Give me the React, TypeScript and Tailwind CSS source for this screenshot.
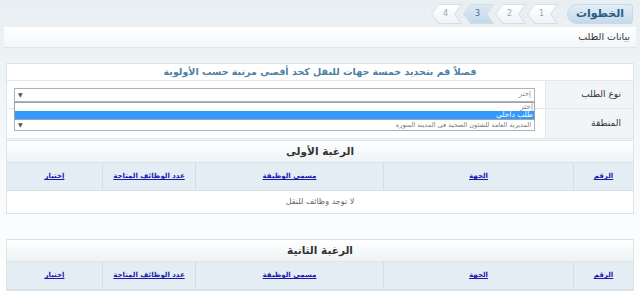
import React from 'react';

const font = { fontFamily: '"DejaVu Sans", "Liberation Sans", sans-serif' };

const Chevron = ({ n, active }: { n: number; active?: boolean }) => (
  <div className="relative w-[31px] h-[20px] flex items-center justify-center">
    <svg width="31" height="20" viewBox="0 0 31 20" className="absolute inset-0">
      <defs>
        <linearGradient id={`g${n}`} x1="0" y1="0" x2="0" y2="1">
          <stop offset="0" stopColor={active ? '#dbe9f3' : '#ffffff'} />
          <stop offset="1" stopColor={active ? '#c3d9e8' : '#eef3f6'} />
        </linearGradient>
      </defs>
      <polygon points="7.5,0.5 30.5,0.5 23.5,10 30.5,19.5 7.5,19.5 0.5,10" fill={`url(#g${n})`} stroke="#d3dde4" />
    </svg>
    <span className={`relative text-[8px] pr-[2px] ${active ? 'text-[#4b6f8c]' : 'text-[#9aa6ae]'}`}>{n}</span>
  </div>
);

const Section = ({ title, empty }: { title: string; empty?: boolean }) => {
  const cols = [
    { t: 'الرقم', w: 'w-[60px]' },
    { t: 'الجهة', w: 'w-[190px]' },
    { t: 'مسمى الوظيفة', w: 'w-[188px]' },
    { t: 'عدد الوظائف المتاحة', w: 'w-[93px]' },
    { t: 'إختيار', w: 'flex-1' },
  ];
  return (
    <div className="border border-[#dde4e9] bg-white">
      <div className="h-[22px] flex items-center justify-center bg-gradient-to-b from-white to-[#eef3f6] border-b border-[#dde4e9] text-[10.5px] font-bold text-[#333]">
        {title}
      </div>
      <div className="flex h-[28px] bg-[#e4edf4] border-b border-[#d8e1e7]">
        {cols.map((c, i) => (
          <div key={i} className={`${c.w} flex items-center justify-center ${i < 4 ? 'border-l border-[#d4dde4]' : ''}`}>
            <span className="text-[7px] font-bold text-[#1a1ab0] underline">{c.t}</span>
          </div>
        ))}
      </div>
      {empty && (
        <div className="h-[22px] flex items-center justify-center text-[8px] text-[#666]">لا توجد وظائف للنقل</div>
      )}
    </div>
  );
};

const App = () => {
  return (
    <div dir="rtl" style={font} className="w-[640px] h-[297px] overflow-hidden bg-gradient-to-b from-[#e8eff2] via-[#f6f8fa] to-white">
      {/* steps bar */}
      <div className="h-[27px] flex items-center gap-[2px] pr-[7px] pt-[1px]">
        <div className="h-[20px] w-[66px] rounded-r-[3px] rounded-l-[10px] bg-gradient-to-b from-[#e3eef6] to-[#c4d9e9] border border-[#c9dae6] flex items-center justify-center text-[11px] font-bold text-[#2c5c86]">
          الخطوات
        </div>
        <div className="flex items-center gap-[1px] mr-[7px]">
          <Chevron n={1} />
          <Chevron n={2} />
          <Chevron n={3} active />
          <Chevron n={4} />
        </div>
      </div>

      {/* title */}
      <div className="mx-[4px] h-[21px] flex items-center pr-[6px] bg-gradient-to-b from-white to-[#f3f6f8] border-b border-[#dfe6ea] text-[9.5px] text-[#333]">
        بيانات الطلب
      </div>

      <div className="px-[6px] pt-[15px]">
        {/* form */}
        <div className="border border-[#dde4e9] bg-white">
          <div className="h-[17px] flex items-center justify-center border-b border-[#e2e8ec] text-[9.5px] font-bold text-[#4e7fa5]">
            فصلاً قم بتحديد خمسة جهات للنقل كحد أقصى مرتبة حسب الأولوية
          </div>
          <div className="flex h-[28px] border-b border-[#e2e8ec]">
            <div className="w-[88px] bg-[#f1f5f8] border-l border-[#e2e8ec] flex items-center pr-[12px] text-[9px] text-[#333]">نوع الطلب</div>
            <div className="flex-1 flex items-center pr-[10px] pl-[7px] relative">
              <div className="w-full h-[14px] border border-[#a9b4bb] bg-white flex items-center justify-between px-[3px]">
                <span className="text-[7px] text-[#888]">إختر</span>
                <span className="text-[6px] text-[#555]">▼</span>
              </div>
              <div className="absolute z-10 top-[21px] right-[10px] left-[7px] border border-[#9aa4aa] bg-white text-[7.5px] leading-[8px]">
                <div className="pr-[1px] text-[#888]">إختر</div>
                <div className="pr-[1px] bg-[#3399ff] text-white">طلب داخلي</div>
              </div>
            </div>
          </div>
          <div className="flex h-[29px]">
            <div className="w-[88px] bg-[#f1f5f8] border-l border-[#e2e8ec] flex items-center pr-[12px] text-[9px] text-[#333]">المنطقة</div>
            <div className="flex-1 flex items-center pr-[10px] pl-[7px]">
              <div className="w-full h-[14px] border border-[#a9b4bb] bg-white flex items-end justify-between px-[3px]">
                <span className="text-[6.5px] leading-[10px] text-[#777]">المديرية العامة للشئون الصحية في المدينة المنورة</span>
                <span className="text-[6px] leading-[10px] text-[#555]">▼</span>
              </div>
            </div>
          </div>
        </div>

        <div className="mt-[1px]">
          <Section title="الرغبة الأولى" empty />
        </div>
        <div className="mt-[25px]">
          <Section title="الرغبة الثانية" />
        </div>
      </div>
    </div>
  );
};

export default App;
